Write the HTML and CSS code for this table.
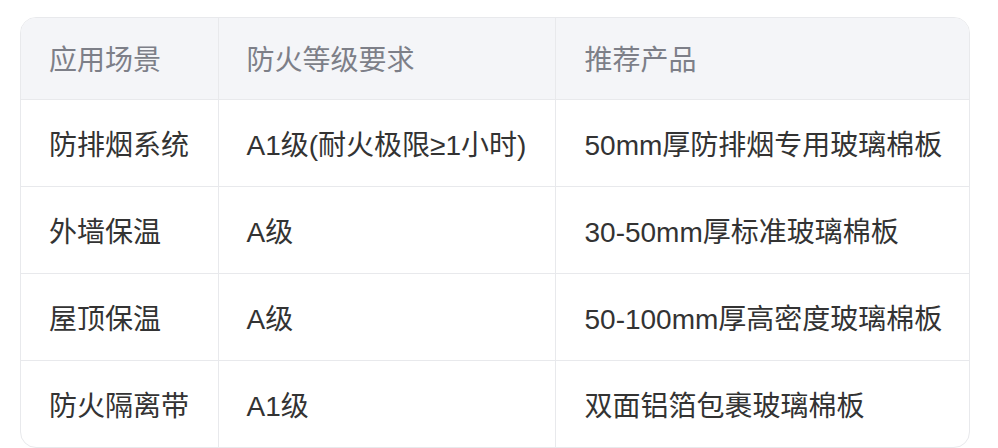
FILE: index.html
```html
<!DOCTYPE html>
<html lang="zh-CN">
<head>
<meta charset="utf-8">
<title>防火等级</title>
<link rel="stylesheet" href="styles.css">
</head>
<body>
<div class="table-wrap">
  <table class="spec-table">
    <thead>
      <tr>
        <th class="c1">应用场景</th>
        <th class="c2">防火等级要求</th>
        <th class="c3">推荐产品</th>
      </tr>
    </thead>
    <tbody>
      <tr>
        <td>防排烟系统</td>
        <td>A1级(耐火极限≥1小时)</td>
        <td>50mm厚防排烟专用玻璃棉板</td>
      </tr>
      <tr>
        <td>外墙保温</td>
        <td>A级</td>
        <td>30-50mm厚标准玻璃棉板</td>
      </tr>
      <tr>
        <td>屋顶保温</td>
        <td>A级</td>
        <td>50-100mm厚高密度玻璃棉板</td>
      </tr>
      <tr>
        <td>防火隔离带</td>
        <td>A1级</td>
        <td>双面铝箔包裹玻璃棉板</td>
      </tr>
    </tbody>
  </table>
</div>
</body>
</html>
```

FILE: styles.css
```css
html, body {
  margin: 0;
  background: #ffffff;
}
body {
  padding: 17px 20px;
  font-family: "Liberation Sans", "Noto Sans CJK SC", sans-serif;
}
.table-wrap {
  width: 950px;
  box-sizing: border-box;
  border: 1px solid #e8e9ec;
  border-radius: 16px;
  overflow: hidden;
}
.spec-table {
  width: 100%;
  border-collapse: collapse;
  table-layout: fixed;
  font-size: 28px;
}
.spec-table th,
.spec-table td {
  box-sizing: border-box;
  text-align: left;
  vertical-align: middle;
  padding: 0 0 0 28px;
  border-right: 1px solid #e8e9ec;
  border-bottom: 1px solid #e8e9ec;
  white-space: nowrap;
}
.spec-table th:last-child,
.spec-table td:last-child {
  border-right: none;
  padding-left: 29px;
}
.spec-table tbody tr:last-child td {
  border-bottom: none;
}
.spec-table th {
  background: #f4f5f8;
  color: #7d7f88;
  font-weight: normal;
  height: 81px;
}
.spec-table td {
  color: #333333;
  height: 87px;
}
.c1 { width: 197px; }
.c2 { width: 337px; }
.c3 { width: auto; }
```
